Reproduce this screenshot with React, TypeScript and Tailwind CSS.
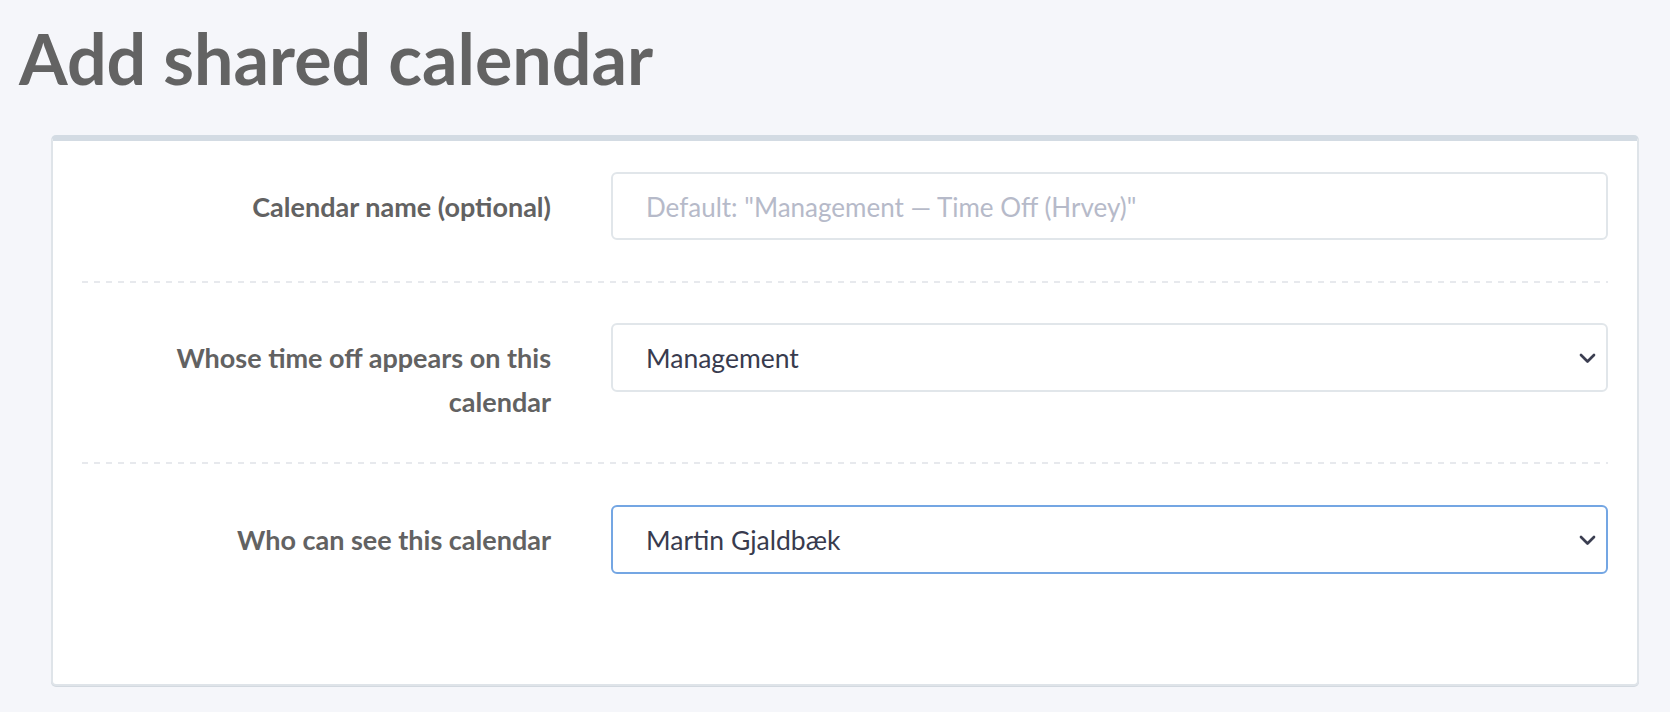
import React from "react";

function Chevron() {
  return (
    <svg width="17" height="11" viewBox="0 0 17 11" className="shrink-0">
      <polyline
        points="2,2 8.5,8.5 15,2"
        fill="none"
        stroke="#3b3e51"
        strokeWidth="2.7"
        strokeLinecap="round"
        strokeLinejoin="round"
      />
    </svg>
  );
}

function Separator() {
  return (
    <div className="h-[2px] w-full bg-[linear-gradient(to_right,#e7e9ed_6px,transparent_6px)] bg-[length:12px_2px] bg-repeat-x" />
  );
}

function Label({ children }: { children: React.ReactNode }) {
  return (
    <div className="pl-[70px] pr-[60px] pt-[13px] text-right text-[27px] leading-[44px] font-bold text-[#626262]">
      {children}
    </div>
  );
}

function SelectBox({ value, focused }: { value: string; focused?: boolean }) {
  return (
    <div
      className={
        focused
          ? "flex h-[69px] items-center justify-between rounded-[6px] border-2 border-[#74a6e3] bg-white pl-[33px] pr-[10px] pt-[2px] text-[26.5px] text-[#383b4e]"
          : "flex h-[69px] items-center justify-between rounded-[6px] border-2 border-[#e1e6ea] bg-white pl-[33px] pr-[10px] pt-[2px] text-[26.5px] text-[#383b4e]"
      }
    >
      <span>{value}</span>
      <Chevron />
    </div>
  );
}

export default function App() {
  return (
    <div className="min-h-[712px] bg-[#f5f6fa] font-['Lato',sans-serif]">
      <div className="h-[135px] pl-[19px] pt-[18px]">
        <h1 className="text-[70px] font-bold leading-[80px] text-[#636363]">Add shared calendar</h1>
      </div>
      <div className="ml-[51px] mr-[31px] rounded-[5px] border-2 border-t-[6px] border-[#dfe4e9] border-t-[#d3dbe3] bg-white px-[29px] pt-[31px] pb-[110px] shadow-[0_1px_0_#d3d9e0]">
        <div className="grid grid-cols-[529px_1fr] items-start pb-[41px]">
          <Label>Calendar name (optional)</Label>
          <input
            readOnly
            placeholder={'Default: "Management \u2014 Time Off (Hrvey)"'}
            className="h-[68px] w-full rounded-[6px] border-2 border-[#e1e6ea] bg-white pl-[33px] pt-[2px] text-[26px] text-[#383b4e] outline-none placeholder:text-[#b6bac9]"
          />
        </div>
        <Separator />
        <div className="grid grid-cols-[529px_1fr] items-start pt-[40px] pb-[38px]">
          <Label>Whose time off appears on this calendar</Label>
          <SelectBox value="Management" />
        </div>
        <Separator />
        <div className="grid grid-cols-[529px_1fr] items-start pt-[41px]">
          <Label>Who can see this calendar</Label>
          <SelectBox value="Martin Gjaldbæk" focused />
        </div>
      </div>
    </div>
  );
}
